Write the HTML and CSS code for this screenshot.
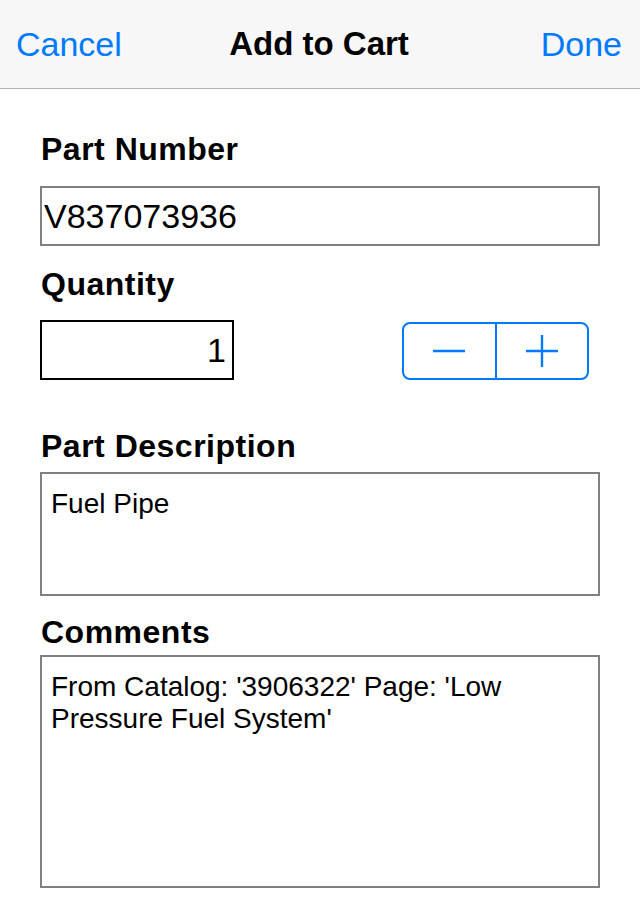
FILE: index.html
```html
<!DOCTYPE html>
<html lang="en">
<head>
    <meta charset="UTF-8">
    <title>Add to Cart</title>
    <meta name="viewport" content="width=device-width, initial-scale=1.0">
    <link rel="stylesheet" href="styles.css">
</head>
<body>
    <header class="nav-bar">
        <a class="nav-btn" href="#">Cancel</a>
        <h1 class="nav-title">Add to Cart</h1>
        <a class="nav-btn nav-done" href="#">Done</a>
    </header>
    <form class="cart-form">
        <label class="field-label" for="part-number">Part Number</label>
        <input class="text-input" id="part-number" type="text" value="V837073936">

        <label class="field-label label-qty" for="qty">Quantity</label>
        <div class="qty-row">
            <input class="qty-input" id="qty" type="text" value="1">
            <div class="stepper">
                <button type="button" class="step-btn" aria-label="Decrease">
                    <svg width="32" height="32" viewBox="0 0 32 32"><path d="M0 16h32" stroke="#007aff" stroke-width="2.4" fill="none"/></svg>
                </button>
                <button type="button" class="step-btn" aria-label="Increase">
                    <svg width="32" height="32" viewBox="0 0 32 32"><path d="M0 16h32M16 0v32" stroke="#007aff" stroke-width="2.4" fill="none"/></svg>
                </button>
            </div>
        </div>

        <label class="field-label label-desc" for="desc">Part Description</label>
        <textarea class="text-area area-desc" id="desc">Fuel Pipe</textarea>

        <label class="field-label label-comments" for="comments">Comments</label>
        <textarea class="text-area area-comments" id="comments">From Catalog: '3906322' Page: 'Low Pressure Fuel System'</textarea>
    </form>
</body>
</html>
```
FILE: styles.css
```css
body {
    margin: 0;
    background: #fff;
    font-family: 'Liberation Sans', Arial, sans-serif;
    color: #000;
}
.nav-bar {
    height: 88px;
    background: #f7f7f7;
    border-bottom: 1px solid #b2b2b2;
    display: grid;
    grid-template-columns: 1fr auto 1fr;
    align-items: center;
    padding: 0 18px 0 16px;
}
.nav-btn {
    color: #007aff;
    font-size: 34px;
    text-decoration: none;
    line-height: 40px;
    justify-self: start;
}
.nav-done {
    justify-self: end;
}
.nav-title {
    margin: 0;
    font-size: 33px;
    font-weight: 700;
    line-height: 40px;
}
.cart-form {
    display: flex;
    flex-direction: column;
    padding: 41px 41px 0 40px;
}
.field-label {
    font-size: 32px;
    font-weight: 700;
    letter-spacing: 0.5px;
    line-height: 38px;
    padding-left: 1px;
    margin-bottom: 18px;
}
.text-input {
    box-sizing: border-box;
    width: 560px;
    height: 60px;
    margin: 0;
    padding: 0 0 0 2px;
    border: 2px solid #808080;
    border-radius: 0;
    font-family: inherit;
    font-size: 34px;
    color: #000;
    background: #fff;
    outline: none;
}
.label-qty {
    margin-top: 19px;
    margin-bottom: 17px;
}
.qty-row {
    display: flex;
    align-items: flex-end;
    justify-content: space-between;
    padding-right: 10px;
}
.qty-input {
    box-sizing: border-box;
    width: 194px;
    height: 60px;
    margin: 0;
    padding: 0 6px 0 0;
    border: 2px solid #000;
    border-radius: 0;
    font-family: inherit;
    font-size: 34px;
    text-align: right;
    background: #fff;
    outline: none;
}
.stepper {
    display: flex;
    width: 187px;
    height: 58px;
    box-sizing: border-box;
    border: 2px solid #007aff;
    border-radius: 8px;
    overflow: hidden;
}
.step-btn {
    flex: 1;
    margin: 0;
    padding: 0;
    border: none;
    background: none;
    display: flex;
    align-items: center;
    justify-content: center;
    cursor: pointer;
}
.step-btn + .step-btn {
    border-left: 2px solid #007aff;
}
.label-desc {
    margin-top: 47px;
    margin-bottom: 7px;
}
.text-area {
    box-sizing: border-box;
    width: 560px;
    margin: 0;
    padding: 14px 10px 0 9px;
    border: 2px solid #808080;
    border-radius: 0;
    font-family: inherit;
    font-size: 28px;
    line-height: 32px;
    color: #000;
    background: #fff;
    resize: none;
    overflow: hidden;
    outline: none;
}
.area-desc {
    height: 124px;
}
.label-comments {
    margin-top: 17px;
    margin-bottom: 4px;
}
.area-comments {
    height: 233px;
}
```
